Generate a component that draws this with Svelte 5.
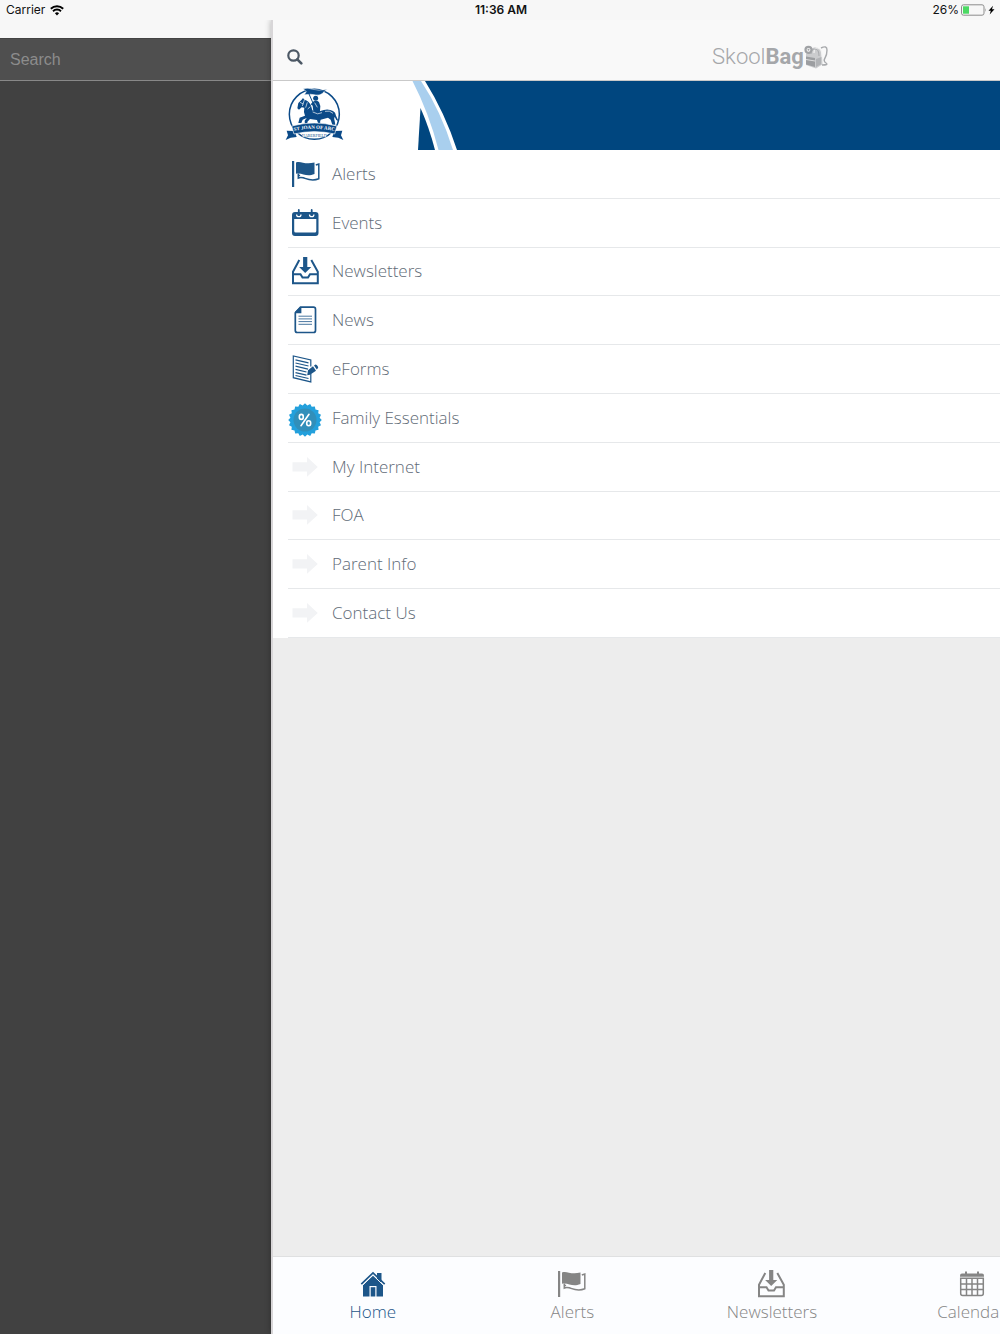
<script lang="ts">
  const items = [
    { label: 'Alerts', icon: 'flag' },
    { label: 'Events', icon: 'events' },
    { label: 'Newsletters', icon: 'inbox' },
    { label: 'News', icon: 'news' },
    { label: 'eForms', icon: 'form' },
    { label: 'Family Essentials', icon: 'badge' },
    { label: 'My Internet', icon: 'arrow' },
    { label: 'FOA', icon: 'arrow' },
    { label: 'Parent Info', icon: 'arrow' },
    { label: 'Contact Us', icon: 'arrow' }
  ];
  const tabs = [
    { label: 'Home', icon: 'home' },
    { label: 'Alerts', icon: 'flag' },
    { label: 'Newsletters', icon: 'inbox' },
    { label: 'Calendar', icon: 'calendar' }
  ];
  let active = $state('Home');

  // Scalloped outline of the discount badge
  const seal = Array.from({ length: 40 }, (_, i) => {
    const r = i % 2 ? 14.8 : 16.8;
    const a = (i * Math.PI) / 20;
    return `${(17 + r * Math.sin(a)).toFixed(2)},${(17 - r * Math.cos(a)).toFixed(2)}`;
  }).join(' ');
</script>

{#snippet glyph(name)}
  {#if name === 'flag'}
    <svg class="glyph" viewBox="0 0 28 28" aria-hidden="true">
      <path d="M0 1h2.200v26H0z" fill="currentColor" />
      <path d="M4 2.500C9 .5 12 5 22.500 2.600V14C14 17.500 11 12.500 4 13.700z" fill="currentColor" />
      <path d="M23.800 5l3-1v14.700c-7 3-12 .2-15.500-.9-2-.6-3.500-.6-5 .2v-4.500M5.500 15.600h2.600" fill="none" stroke="currentColor" stroke-width="1.500" />
    </svg>
  {:else if name === 'events'}
    <svg class="glyph" viewBox="0 0 28 28" aria-hidden="true">
      <path fill-rule="evenodd" d="M3 3h20.500a3 3 0 0 1 3 3v18a3 3 0 0 1-3 3H3a3 3 0 0 1-3-3V6a3 3 0 0 1 3-3zM2.200 10v12a1.500 1.500 0 0 0 1.500 1.500h19.100a1.500 1.500 0 0 0 1.500-1.500V10z" fill="currentColor" />
      <path d="M4.600 5.500a2.200 2.200 0 1 0 4.400 0M17.500 5.500a2.200 2.200 0 1 0 4.400 0" fill="none" stroke="#fff" stroke-width="1.300" />
      <path d="M6.800.9v5M19.700.9v5" stroke="currentColor" stroke-width="1.800" stroke-linecap="round" />
    </svg>
  {:else if name === 'inbox'}
    <svg class="glyph" viewBox="0 0 28 28" aria-hidden="true">
      <path d="M11.100 0h4.200v10h4l-6.100 6-6.100-6h4z" fill="currentColor" />
      <path d="M7.300 3L1 14.700V26.200h24.800V14.700L19.300 3M1 17.300h7.500l2 3.200H16l2-3.200h7.800" fill="none" stroke="currentColor" stroke-width="2" />
    </svg>
  {:else if name === 'news'}
    <svg class="glyph" viewBox="0 0 28 28" aria-hidden="true">
      <path d="M8.500 1.200H21.500a2 2 0 0 1 2 2v21.300a2 2 0 0 1-2 2H5.300a2 2 0 0 1-2-2V6.800z" fill="none" stroke="currentColor" stroke-width="1.700" />
      <path d="M8 1l1.400.2v6H3.200l.2-1.600z" fill="currentColor" />
      <path d="M6.500 10.200H20M6.500 12.900H20M6.500 15.600H20M6.500 18.300H20" stroke="currentColor" stroke-width="1" opacity=".8" />
    </svg>
  {:else if name === 'form'}
    <svg class="glyph" viewBox="0 0 28 28" aria-hidden="true">
      <path d="M18.800 11.500V4.900L1.300.9v21.800l17.500 4.200V18.500" fill="none" stroke="currentColor" stroke-width="1.200" />
      <path d="M3.500 4.800l13 3M3.500 8l13 3M3.500 11.200l12.500 2.900M3.500 14.400l11 2.600M3.500 17.600l11 2.600M3.500 20.500l13 3" stroke="currentColor" stroke-width="1.200" />
      <path d="M21 11.200l3 4.500-6 4-2.800.5.800-5zM22 10.500l1.500-1c1-.5 3.500 2.800 2.500 3.600l-1.200 1.500z" fill="currentColor" />
    </svg>
  {:else if name === 'badge'}
    <svg class="glyph seal" viewBox="0 0 34 34" aria-hidden="true">
      <polygon points={seal} fill="#23a0dc" />
      <circle cx="17" cy="17" r="11.500" fill="#318fba" />
      <g fill="none" stroke="#fff" stroke-width="1.600">
        <ellipse cx="13.300" cy="13.900" rx="2" ry="2.500" />
        <ellipse cx="20.700" cy="20.300" rx="2" ry="2.500" />
        <path d="M21 11.300L13 22.700" stroke-linecap="round" />
      </g>
    </svg>
  {:else if name === 'arrow'}
    <svg class="glyph" viewBox="0 0 28 28" aria-hidden="true">
      <path d="M.5 9.200h14.500V4L25.800 14 15 23.800v-5.300H.5z" fill="#f2f3f5" />
    </svg>
  {:else if name === 'home'}
    <svg class="glyph" viewBox="0 0 28 28" aria-hidden="true">
      <path d="M18 3h4.500v9H18z" fill="currentColor" />
      <path d="M14 5.500L24 15v11.500h-6.500V16h-7v10.500H4V15z" fill="currentColor" />
      <path d="M11.700 17.200h4.600v9.300h-4.600z" fill="currentColor" />
      <path d="M3 15.800L14 5.200l11 10.600" fill="none" stroke="#fcfdff" stroke-width="1" />
      <path d="M2.300 14.200L14 3l11.700 11.200" fill="none" stroke="currentColor" stroke-width="1.700" />
    </svg>
  {:else}
    <svg class="glyph" viewBox="0 0 28 28" aria-hidden="true">
      <path d="M2 6.800V5.500q0-2 2-2h20q2 0 2 2v1.300z" fill="currentColor" />
      <path d="M8 1.500v3M20 1.500v3" stroke="currentColor" stroke-width="2" />
      <path d="M2.700 8.200h22.600V23.500a2 2 0 0 1-2 2H4.700a2 2 0 0 1-2-2zM2.700 14h22.600M2.700 19.500h22.600M8.500 8.200v17.300M14 8.200v17.300M19.500 8.200v17.300" fill="none" stroke="currentColor" stroke-width="1.500" />
    </svg>
  {/if}
{/snippet}

<div class="screen">
  <div class="status">
    <span class="carrier">
      Carrier
      <svg width="14" height="11" viewBox="0 0 14 11" aria-hidden="true">
        <path d="M.8 3.800a9 9 0 0 1 12.400 0M3 6.200a5.700 5.700 0 0 1 8 0" fill="none" stroke="#000" stroke-width="1.900" />
        <path d="M4.900 8.200a3 3 0 0 1 4.200 0L7 10.400z" />
      </svg>
    </span>
    <strong>11:36 AM</strong>
    <span class="power">
      26%
      <svg width="35" height="12" viewBox="0 0 35 12" aria-hidden="true">
        <rect x=".5" y=".8" width="22.500" height="10.400" rx="2" fill="none" stroke="#8c8c8c" />
        <rect x="2" y="2.300" width="6" height="7.400" fill="#4cd964" />
        <path d="M24.300 4q1.400 2 0 4z" fill="#8c8c8c" />
        <path d="M32 1.700l-4.500 5h2.300L28.700 10.500l4.800-5.300H31z" />
      </svg>
    </span>
  </div>

  <div class="stage">
    <aside class="drawer">
      <input class="search" type="text" placeholder="Search" aria-label="Search" />
    </aside>

    <div class="panel">
      <header class="bar">
        <button class="find" aria-label="Find">
          <svg width="16" height="16" viewBox="0 0 16 16" aria-hidden="true">
            <circle cx="6.500" cy="6.500" r="5.200" fill="none" stroke="#4c5865" stroke-width="2.200" />
            <path d="M10.300 10.300l4 4" stroke="#4c5865" stroke-width="2.600" stroke-linecap="round" />
          </svg>
        </button>
        <div class="brand">
          <span>Skool<b>Bag</b></span>
          <svg width="24" height="24" viewBox="0 0 24 24" aria-hidden="true">
            <path d="M7 4q5-4 10 1l2 14-7 4.500L2 20V9q1-4 5-5z" fill="#cbccce" />
            <path d="M10 8q0-6 4-5t4 8v8" fill="none" stroke="#f4f4f4" stroke-width="1.200" />
            <path d="M7 9q0-5 4-5t4 7" fill="none" stroke="#a8aaad" />
            <path d="M2 11.500l9 1.500v9L2 19.500z" fill="#9c9ea1" />
            <path d="M2 14.500l9 1.500" stroke="#ddd" />
            <path d="M12 14l5.500-2v7L12 22z" fill="#b1b3b6" />
            <path d="M17 3q6-3 6 2t-2 8 1 5-4 2" fill="none" stroke="#a8aaad" stroke-width="1.400" />
            <circle cx="4.500" cy="4.800" r="3" fill="#f9f9f9" stroke="#a0a2a5" stroke-width="2.200" />
            <circle cx="4.500" cy="4.800" r="1" fill="#a0a2a5" />
          </svg>
        </div>
      </header>

      <div class="banner">
        <svg class="swoosh" width="190" height="69" viewBox="0 0 190 69" role="img" aria-label="St Joan of Arc Haberfield">
          <path d="M0 0h190v69H0z" fill="#fff" />
          <path d="M147.500 27Q156 46 162 69H145z" fill="#00467f" />
          <path d="M139.500 0Q156 32 165.500 69H180Q168 30 148 0z" fill="#a9cfee" />
          <path d="M152 0Q172 32 184 69h6V0z" fill="#00467f" />
          <g transform="translate(-3 -5) scale(.3333)" fill="#0b4a88" stroke-linejoin="round">
            <circle cx="133" cy="115" r="75" fill="#fff" stroke="#0b4a88" stroke-width="4.500" />
            <!-- Banner on its lance -->
            <path d="M100 38q14-4 28 2 18 5 44 0-10 4-14 12-8 7-20 5-16-4-35-1l6-9z" stroke="#fff" stroke-width="1.500" />
            <path d="M111 40l28 64" fill="none" stroke="#0b4a88" stroke-width="3" />
            <!-- Rider -->
            <circle cx="137" cy="67" r="7.500" />
            <path d="M129 77q10-6 18 1l4 12-1 15 5 8-5 15h-8l2-14-14-8-2-17-6-4z" />
            <!-- Horse -->
            <path d="M99 66l4 5q14 3 20 18l4 14q10 8 24 2 22-9 38 0 8 4 9 14l8 17q-9-3-12-14-3 7 0 13l2 11h-9l-5-15-8-6-22 6-2 8 6 8h-10l-5-15-21-3-8 9 2 11h-9l-1-15 6-8-12 5-4 10h-9l4-16 16-6q-5-12-2-24l-8-1-8 7-5-4 3-16 10-10z" />
            <path d="M90 79l10 5M103 72l-6 18M112 79l-5 16M121 92l-8 7M134 80l8 14M128 108q16 10 28 2M165 106q14-4 24 6" fill="none" stroke="#fff" stroke-width="2" />
            <path d="M93 145q40-8 80 0v6H93z" />
            <!-- Scroll -->
            <path d="M50 164l24 1 6 18-18 2-15 7 7-14zM217 164l-24 1-6 18 18 2 15 7-7-14z" />
            <path d="M65 150q68-18 136 0l-7 24q-61-14-122 0z" stroke="#fff" stroke-width="2" />
            <path d="M94 171q39-8 78 0l-4 13q-35-4-70 0z" fill="#fff" />
          </g>
          <path id="scroll" d="M19 50.500q22.300-5.500 44.600 0" fill="none" />
          <text class="motto"><textPath href="#scroll" startOffset="50%" text-anchor="middle">ST JOAN OF ARC</textPath></text>
          <text class="suburb" x="41.300" y="55.500" text-anchor="middle">HABERFIELD</text>
        </svg>
      </div>

      <nav class="menu" aria-label="Sections">
        {#each items as item}
          <a href="#{item.label.replaceAll(' ', '-')}">
            <span class="lead">{@render glyph(item.icon)}</span>
            <span class="label">{item.label}</span>
          </a>
        {/each}
      </nav>

      <nav class="tabs" aria-label="Tabs">
        {#each tabs as tab}
          <button class:active={active === tab.label} onclick={() => (active = tab.label)}>
            {@render glyph(tab.icon)}
            <span>{tab.label}</span>
          </button>
        {/each}
      </nav>
    </div>
  </div>
</div>

<style>
  :global(body) {
    margin: 0;
  }
  .screen {
    display: flex;
    flex-direction: column;
    height: 100vh;
    overflow: hidden;
    background: #f7f7f7;
    font-family: 'Open Sans', sans-serif;
  }
  .status {
    display: grid;
    grid-template-columns: 1fr auto 1fr;
    align-items: center;
    height: 20px;
    padding: 0 4px 0 6px;
    font: 400 12px/20px Inter, sans-serif;
    color: #111;
  }
  .status strong {
    font-weight: 600;
  }
  .carrier,
  .power {
    display: flex;
    align-items: center;
    gap: 5px;
  }
  .power {
    justify-content: flex-end;
    gap: 2px;
  }
  .stage {
    flex: 1;
    min-height: 0;
    display: flex;
  }
  .drawer {
    flex: 0 0 271px;
    margin-top: 18px;
    background: #414141;
  }
  .search {
    display: block;
    box-sizing: border-box;
    width: 100%;
    height: 43px;
    padding: 0 10px;
    border: 0;
    border-top: 1px solid #444;
    border-bottom: 1px solid #888;
    border-radius: 0;
    background: #4f4f4f;
    color: #ddd;
    font: 400 16px/20px 'Liberation Sans', sans-serif;
  }
  .search::placeholder {
    color: #8c8c8c;
    opacity: 1;
  }
  .panel {
    flex: 0 0 100%;
    box-sizing: border-box;
    display: flex;
    flex-direction: column;
    border-left: 2px solid #d8d6d8;
    background: #ededed;
    box-shadow: 0 0 6px rgba(0, 0, 0, 0.3);
    clip-path: inset(0 0 0 -10px);
  }
  .bar {
    display: grid;
    grid-template-columns: 1fr auto 1fr;
    align-items: center;
    box-sizing: border-box;
    height: 61px;
    padding: 14px 17px 0 13px;
    border-bottom: 1px solid #c9c9c9;
    background: #f9f9f9;
  }
  .find {
    display: flex;
    justify-self: start;
    padding: 1px;
    border: 0;
    background: none;
  }
  .brand {
    display: flex;
    align-items: center;
    font: 300 22px/24px Roboto, sans-serif;
    color: #a5a7aa;
  }
  .brand b {
    font-weight: 700;
  }
  .banner {
    height: 69px;
    background: #00467f;
  }
  .swoosh {
    display: block;
  }
  .motto {
    font: 700 5px 'Liberation Serif', serif;
    fill: #fff;
  }
  .suburb {
    font: 400 4px 'Liberation Serif', serif;
    fill: #0b4a88;
  }
  .menu {
    display: flex;
    flex-direction: column;
    min-height: 488px;
    background: #fff;
  }
  .menu a {
    flex: 1;
    display: flex;
    align-items: center;
    margin-left: 15px;
    border-bottom: 1px solid #e6e8ea;
    color: #5f6b77;
    font-size: 17px;
    font-weight: 300;
    line-height: 24px;
    text-decoration: none;
  }
  .lead {
    display: flex;
    width: 40px;
    padding-left: 4px;
    color: #1d5689;
  }
  .glyph {
    display: block;
    width: 28px;
    height: 28px;
    overflow: visible;
  }
  .lead .seal {
    width: 34px;
    height: 34px;
    margin: 4px 0 0 -4px;
  }
  .tabs {
    display: flex;
    height: 78px;
    margin-top: auto;
    box-sizing: border-box;
    border-top: 1px solid #dfe0e1;
    background: #fcfdff;
  }
  .tabs button {
    flex: 0 0 20%;
    display: flex;
    flex-direction: column;
    align-items: center;
    gap: 2px;
    padding: 13px 0 0;
    border: 0;
    background: none;
    color: #858585;
    font: 300 17px/24px 'Open Sans', sans-serif;
  }
  .tabs .active {
    color: #1d5689;
  }
</style>
